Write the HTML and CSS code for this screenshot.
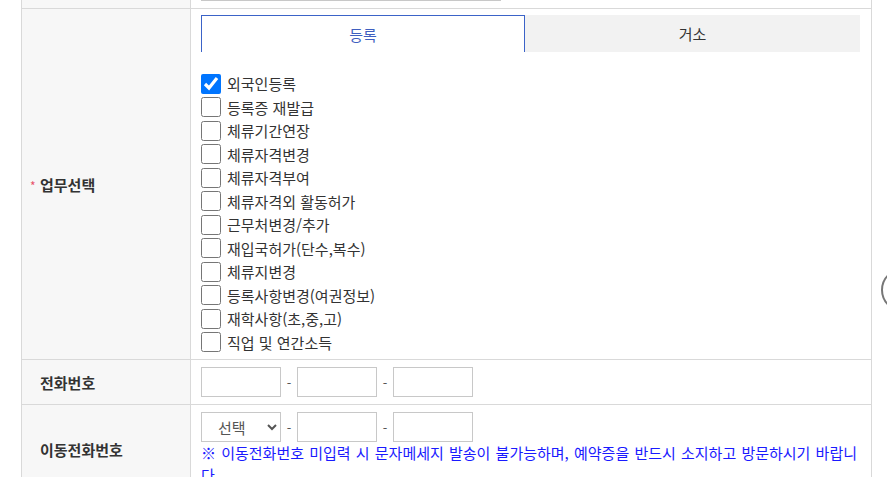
FILE: index.html
```html
<!DOCTYPE html>
<html lang="ko">
<head>
  <meta charset="UTF-8">
  <meta name="viewport" content="width=device-width, initial-scale=1.0">
  <title>업무선택</title>
  <link rel="stylesheet" href="styles.css">
</head>
<body>
<table class="form-table">
  <colgroup>
    <col class="col-label">
    <col class="col-field">
  </colgroup>
  <tr class="row-prev">
    <th></th>
    <td><input type="text" class="input-wide"></td>
  </tr>
  <tr>
    <th><span class="req">*</span>업무선택</th>
    <td class="cell-tasks">
      <div class="tabs">
        <div class="tab active">등록</div>
        <div class="tab">거소</div>
      </div>
      <ul class="task-list">
        <li><label><input type="checkbox" checked>외국인등록</label></li>
        <li><label><input type="checkbox">등록증 재발급</label></li>
        <li><label><input type="checkbox">체류기간연장</label></li>
        <li><label><input type="checkbox">체류자격변경</label></li>
        <li><label><input type="checkbox">체류자격부여</label></li>
        <li><label><input type="checkbox">체류자격외 활동허가</label></li>
        <li><label><input type="checkbox">근무처변경/추가</label></li>
        <li><label><input type="checkbox">재입국허가(단수,복수)</label></li>
        <li><label><input type="checkbox">체류지변경</label></li>
        <li><label><input type="checkbox">등록사항변경(여권정보)</label></li>
        <li><label><input type="checkbox">재학사항(초,중,고)</label></li>
        <li><label><input type="checkbox">직업 및 연간소득</label></li>
      </ul>
    </td>
  </tr>
  <tr>
    <th>전화번호</th>
    <td>
      <div class="phone">
        <input type="text" class="input-num">
        <span class="dash">-</span>
        <input type="text" class="input-num">
        <span class="dash">-</span>
        <input type="text" class="input-num">
      </div>
    </td>
  </tr>
  <tr>
    <th>이동전화번호</th>
    <td>
      <div class="phone">
        <select class="input-num select">
          <option>선택</option>
          <option>010</option>
          <option>011</option>
        </select>
        <span class="dash">-</span>
        <input type="text" class="input-num">
        <span class="dash">-</span>
        <input type="text" class="input-num">
      </div>
      <p class="notice">※ 이동전화번호 미입력 시 문자메세지 발송이 불가능하며, 예약증을 반드시 소지하고 방문하시기 바랍니다</p>
    </td>
  </tr>
</table>

<button class="float-btn" type="button"></button>
</body>
</html>
```

FILE: styles.css
```css
body {
  margin: 0;
  font-family: "Noto Sans CJK KR", "Noto Sans", sans-serif;
  font-size: 15px;
  color: #333;
  background: #fff;
  overflow: hidden;
}
.form-table {
  width: 850px;
  margin: -37px 0 0 21px;
  border-collapse: collapse;
  table-layout: fixed;
}
.col-label { width: 169px; }
.col-field { width: 681px; }
.form-table th,
.form-table td {
  border: 1px solid #d9d9d9;
}
.form-table th {
  background: #f7f7f7;
  text-align: left;
  padding: 0 0 0 18px;
  font-weight: bold;
  color: #333;
  vertical-align: middle;
}
.form-table td {
  padding: 7px 10px;
  vertical-align: top;
}
.req {
  display: inline-block;
  width: 6px;
  margin: 0 4px 0 -10px;
  color: #e8536b;
  font-weight: normal;
  font-size: 12px;
}
.input-wide {
  display: block;
  width: 300px;
  height: 30px;
  box-sizing: border-box;
  border: 1px solid #c8c8c8;
  margin: 0;
}
.cell-tasks {
  padding-top: 6px !important;
  padding-bottom: 5px !important;
}
.tabs {
  display: flex;
  height: 37px;
}
.tab {
  display: flex;
  align-items: center;
  justify-content: center;
  box-sizing: border-box;
  height: 37px;
  color: #333;
  background: #f2f2f2;
}
.tab:first-child { width: 324px; }
.tab:last-child { width: 335px; }
.tab.active {
  background: #fff;
  color: #3f5fc0;
  border: 1px solid #3b63c8;
  border-bottom: none;
}
.task-list {
  list-style: none;
  margin: 20px 0 0;
  padding: 0;
}
.task-list li {
  height: 23.5px;
}
.task-list label {
  display: flex;
  align-items: center;
  height: 23.5px;
  color: #333;
  gap: 6px;
}
.task-list input {
  width: 20px;
  height: 20px;
  margin: 0;
  accent-color: #0075ff;
}
.phone {
  display: flex;
  align-items: center;
  height: 30px;
}
.input-num {
  width: 80px;
  height: 30px;
  box-sizing: border-box;
  border: 1px solid #c8c8c8;
  margin: 0;
  background: #fff;
}
.select {
  font-family: inherit;
  font-size: 15px;
  color: #555;
  padding: 0 0 0 12px;
  border-radius: 0;
}
.dash {
  width: 16px;
  text-align: center;
  color: #555;
  font-size: 13px;
}
.notice {
  margin: 0;
  color: #1a1aff;
  line-height: 22px;
  word-spacing: 1px;
  padding-right: 2px;
}
.float-btn {
  position: fixed;
  left: 881px;
  top: 268px;
  width: 44px;
  height: 44px;
  border: 2px solid #777;
  border-radius: 50%;
  background: #fff;
  padding: 0;
}
```
